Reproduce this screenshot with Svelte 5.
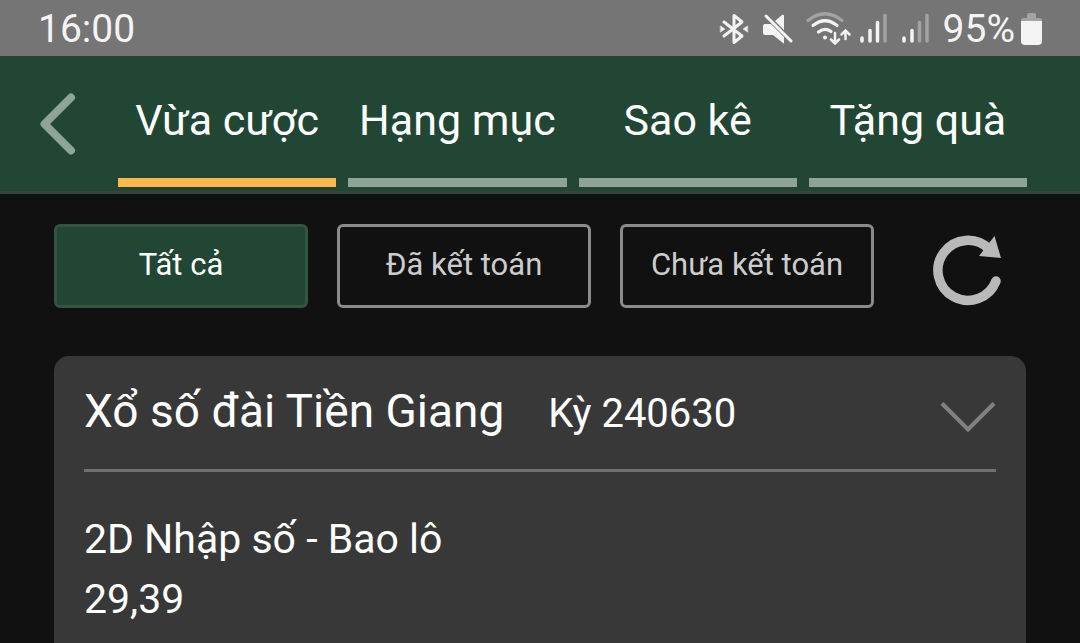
<script>
  const tabs = ['Vừa cược', 'Hạng mục', 'Sao kê', 'Tặng quà'];
  const filters = ['Tất cả', 'Đã kết toán', 'Chưa kết toán'];
  let activeTab = $state(0);
  let activeFilter = $state(0);
  let open = $state(true);
</script>

<div class="page">
  <div class="status">
    <span>16:00</span>
    <div class="indicators">
      <svg class="bluetooth" width="30" height="34" viewBox="0 0 30 34" fill="none" stroke="#f4f4f4" stroke-width="3" stroke-linejoin="round" stroke-linecap="round" aria-hidden="true">
        <path d="M5 10 L23 24 L15 30.500 V3.500 L23 10 L5 24" />
        <path d="M1.500 14 L6 17 L1.500 20 Z M28.500 14 L24 17 L28.500 20 Z" fill="#f4f4f4" stroke-width="0.500" />
      </svg>
      <svg class="mute" width="32" height="34" viewBox="0 0 32 34" aria-hidden="true">
        <path d="M2 14 Q2 12 4 12 H10 L23 25 V31 Q23 32 22 31 L12 23 H4 Q2 23 2 21 Z M14 9 L21 3 Q23 2 23 4 V18 Z" fill="#f4f4f4" />
        <path d="M5 4 L30 29" stroke="#f4f4f4" stroke-width="3" stroke-linecap="round" />
      </svg>
      <svg class="wifi" width="46" height="34" viewBox="0 0 46 34" fill="none" stroke="#f4f4f4" stroke-width="3.200" stroke-linecap="round" aria-hidden="true">
        <path d="M3 8.500 Q20 -5 37 8.500" stroke="#a3a3a3" />
        <path d="M8 13.500 Q20 4 32 13.500" />
        <path d="M13.500 20 Q20 15 26 19.500" />
        <circle cx="20" cy="25.500" r="2" fill="#f4f4f4" stroke="none" />
        <path d="M30 21 V31 M26 27.500 L30 31.500 L34 27.500 M40.500 27 V19 M36.500 22.500 L40.500 18.500 L44.500 22.500" stroke-width="2.500" />
      </svg>
      <svg class="signal" width="30" height="34" viewBox="0 0 30 34" stroke-width="3.500" stroke-linecap="round" aria-hidden="true">
        <path d="M3 26 V29 M11 18.500 V29 M18.500 10.500 V29" stroke="#f4f4f4" />
        <path d="M26 3.500 V29" stroke="#a3a3a3" />
      </svg>
      <svg class="signal" width="30" height="34" viewBox="0 0 30 34" stroke-width="3.500" stroke-linecap="round" aria-hidden="true">
        <path d="M3 26 V29 M11 18.500 V29" stroke="#f4f4f4" />
        <path d="M18.500 10.500 V29 M26 3.500 V29" stroke="#a3a3a3" />
      </svg>
      <span class="percent">95%</span>
      <svg class="battery" width="22" height="34" viewBox="0 0 22 34" aria-hidden="true">
        <path d="M0 9 V8 Q0 6 3 6 H6 V3 Q6 1 8 1 H13 Q15 1 15 3 V6 H18 Q21 6 21 8 V9 Z" fill="#a3a3a3" />
        <path d="M0 9 H21 V29 Q21 33 17 33 H4 Q0 33 0 29 Z" fill="#f4f4f4" />
      </svg>
    </div>
  </div>

  <header>
    <button class="back" aria-label="Quay lại">
      <svg width="36" height="62" viewBox="0 0 36 62" fill="none" aria-hidden="true">
        <path d="M31 4.500 L4.500 31 L31 57.500" stroke="#8fa497" stroke-width="8" stroke-linecap="round" stroke-linejoin="round" />
      </svg>
    </button>
    <nav>
      {#each tabs as tab, i}
        <button class="tab" class:active={i === activeTab} onclick={() => (activeTab = i)}>{tab}</button>
      {/each}
    </nav>
  </header>

  <main>
    <div class="toolbar">
      <div class="filters">
        {#each filters as filter, i}
          <button class="filter" class:active={i === activeFilter} onclick={() => (activeFilter = i)}>{filter}</button>
        {/each}
      </div>
      <button class="refresh" aria-label="Tải lại">
        <svg width="70" height="72" viewBox="0 0 70 72" fill="none" aria-hidden="true">
          <path d="M63 47 A30 30 0 1 1 56 15" stroke="#b9b9b9" stroke-width="9.500" />
          <circle cx="63" cy="47" r="4.750" fill="#b9b9b9" />
          <path d="M61.500 2 L68 24 L46 22 Z" fill="#b9b9b9" />
        </svg>
      </button>
    </div>

    <section class="card">
      <div class="card-head">
        <div class="title">
          <h2>Xổ số đài Tiền Giang</h2>
          <span>Kỳ 240630</span>
        </div>
        <button class="toggle" aria-label="Chi tiết" aria-expanded={open} onclick={() => (open = !open)}>
          <svg width="56" height="32" viewBox="0 0 56 32" fill="none" aria-hidden="true">
            <path d="M2 2.500 L28 28.500 L54 2.500" stroke="#818181" stroke-width="4" />
          </svg>
        </button>
      </div>
      {#if open}
        <div class="bet">
          <p>2D Nhập số - Bao lô</p>
          <p>29,39</p>
        </div>
      {/if}
    </section>
  </main>
</div>

<style>
  :global(body) {
    margin: 0;
    background: #111;
  }
  .page {
    display: flex;
    flex-direction: column;
    min-height: 100vh;
    background: #111;
    color: #fff;
    font-family: Roboto, "Liberation Sans", sans-serif;
    font-size: 40px;
  }
  button {
    margin: 0;
    padding: 0;
    border: 0;
    background: none;
    color: inherit;
    font-family: inherit;
    cursor: pointer;
  }
  svg {
    display: block;
    flex: none;
  }
  .status {
    display: flex;
    align-items: center;
    justify-content: space-between;
    height: 56px;
    padding: 2px 37px 0 38px;
    box-sizing: border-box;
    background: #757575;
    color: #f4f4f4;
    font-size: 39px;
  }
  .indicators {
    display: flex;
    align-items: center;
    gap: 12px;
  }
  .wifi {
    margin-right: -4px;
  }
  .percent {
    margin-right: -6px;
  }
  header {
    display: flex;
    align-items: stretch;
    height: 135px;
    padding-right: 53px;
    background: #214734;
    border-bottom: 3px solid #36443d;
  }
  .back {
    display: flex;
    align-items: center;
    width: 118px;
    padding-left: 40px;
  }
  nav {
    display: flex;
    flex: 1;
    gap: 12px;
    padding-bottom: 4px;
  }
  .tab {
    flex: 1 1 0;
    padding-top: 6px;
    border-bottom: 9px solid #8fa497;
    font-size: 43px;
    white-space: nowrap;
  }
  .tab.active {
    border-color: #ffb84d;
  }
  main {
    display: flex;
    flex: 1;
    flex-direction: column;
    gap: 48px;
    padding: 30px 54px 0;
  }
  .toolbar {
    display: flex;
    align-items: center;
    gap: 59px;
    padding-right: 23px;
  }
  .filters {
    display: flex;
    flex: 1;
    gap: 29px;
  }
  .filter {
    flex: 1 1 0;
    height: 84px;
    padding-bottom: 4px;
    border: 3px solid #8b8b8b;
    border-radius: 6px;
    color: #ccc;
    font-size: 31px;
    white-space: nowrap;
  }
  .filter.active {
    background: #214734;
    border-color: #315542;
    color: #fff;
  }
  .refresh {
    padding-top: 8px;
  }
  .card {
    flex: 1;
    padding: 0 30px;
    border-radius: 15px 15px 0 0;
    background: #383838;
  }
  .card-head {
    display: flex;
    align-items: center;
    justify-content: space-between;
    height: 113px;
    border-bottom: 3px solid #707070;
  }
  .title {
    display: flex;
    align-items: baseline;
    gap: 44px;
    padding-bottom: 4px;
  }
  h2 {
    margin: 0;
    font-size: 46px;
    font-weight: 400;
  }
  .toggle {
    padding-top: 8px;
  }
  .bet {
    padding-top: 37px;
    font-size: 41px;
  }
  p {
    margin: 0;
    line-height: 60px;
  }
</style>
